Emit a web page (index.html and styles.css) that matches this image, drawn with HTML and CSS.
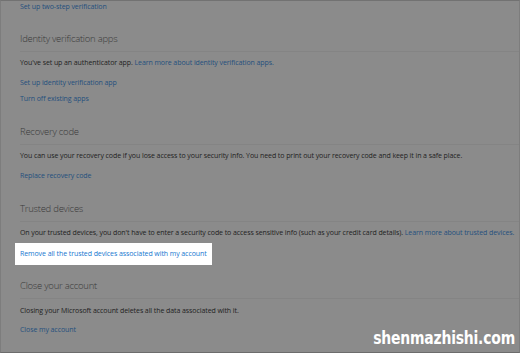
FILE: index.html
```html
<!DOCTYPE html>
<html lang="en">
<head>
    <meta charset="UTF-8">
    <meta name="viewport" content="width=device-width, initial-scale=1.0">
    <title>Security settings</title>
    <link rel="stylesheet" href="styles.css">
</head>
<body>
    <div class="frame">
        <div class="top-link">
            <a href="#">Set up two-step verification</a>
        </div>

        <div class="section">
            <h2>Identity verification apps</h2>
            <p>You've set up an authenticator app. <a href="#">Learn more about identity verification apps.</a></p>
            <ul class="links">
                <li><a href="#">Set up identity verification app</a></li>
                <li><a href="#">Turn off existing apps</a></li>
            </ul>
        </div>

        <div class="section">
            <h2>Recovery code</h2>
            <p>You can use your recovery code if you lose access to your security info. You need to print out your recovery code and keep it in a safe place.</p>
            <ul class="links">
                <li><a href="#">Replace recovery code</a></li>
            </ul>
        </div>

        <div class="section">
            <h2>Trusted devices</h2>
            <p>On your trusted devices, you don't have to enter a security code to access sensitive info (such as your credit card details). <a href="#">Learn more about trusted devices.</a></p>
            <ul class="links">
                <li class="highlight"><a href="#">Remove all the trusted devices associated with my account</a></li>
            </ul>
        </div>

        <div class="section section-close">
            <h2>Close your account</h2>
            <p>Closing your Microsoft account deletes all the data associated with it.</p>
            <ul class="links">
                <li><a href="#">Close my account</a></li>
            </ul>
        </div>

        <div class="watermark">shenmazhishi.com</div>
    </div>
</body>
</html>
```

FILE: styles.css
```css
body {
    margin: 0;
    padding: 0;
    font-family: "Open Sans", "Liberation Sans", sans-serif;
    font-size: 7px;
    letter-spacing: -0.08px;
    color: #1e1e1e;
    background-color: #8b8b8b;
}
a {
    color: #24507e;
    text-decoration: none;
}
.frame {
    position: relative;
    height: 351px;
    border-top: 1px solid #727272;
    border-left: 1px solid #7d7d7d;
    border-right: 1px solid #7d7d7d;
    border-bottom: 1px solid #6c6c6c;
    padding-left: 19px;
    overflow: hidden;
}
.top-link {
    line-height: 11px;
}
.section {
    margin-top: 19px;
}
.section h2 {
    margin: 0;
    font-size: 9.5px;
    font-weight: 300;
    letter-spacing: -0.25px;
    line-height: 16px;
    color: #3a3a3a;
    padding-bottom: 4px;
    border-bottom: 1px solid #848484;
}
.section p {
    margin: 5px 0 0;
    line-height: 12px;
    white-space: nowrap;
}
.links {
    list-style: none;
    margin: 8px 0 0;
    padding: 0;
    display: flex;
    flex-direction: column;
    gap: 4px;
}
.links li {
    line-height: 12px;
}
.highlight {
    align-self: flex-start;
    background-color: #fff;
    padding: 5px;
    margin: -4px 0 -5px -5px;
}
.highlight a {
    color: #1677cf;
}
.section-close {
    margin-top: 18px;
}
.section-close p {
    margin-top: 6px;
}
.section-close .links {
    margin-top: 7px;
}
.watermark {
    position: absolute;
    right: 4px;
    bottom: 5px;
    font-family: "DejaVu Sans Condensed", "DejaVu Sans", sans-serif;
    font-weight: bold;
    font-size: 15.5px;
    letter-spacing: -0.2px;
    color: #fff;
    transform: scaleY(1.15);
}
```
